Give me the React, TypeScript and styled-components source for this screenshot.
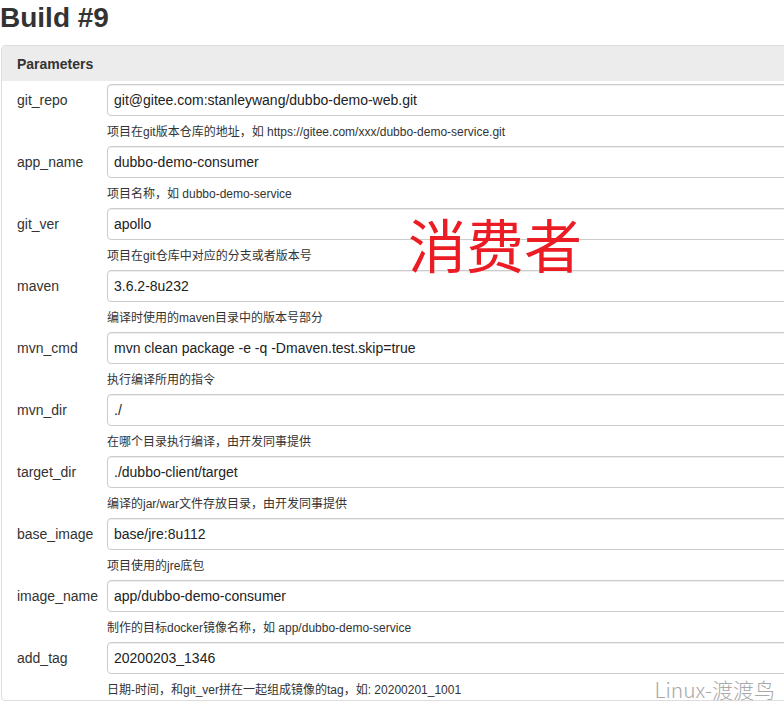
import styled, { createGlobalStyle } from "styled-components";

const GlobalStyle = createGlobalStyle`
  html, body {
    margin: 0;
    padding: 0;
    background: #fff;
    overflow: hidden;
  }
  body {
    font-family: "Liberation Sans", Arial, "Noto Sans CJK SC", sans-serif;
    color: #333;
  }
`;

const Page = styled.div`
  position: relative;
  width: 784px;
  height: 707px;
  overflow: hidden;
`;

const Title = styled.h1`
  margin: 0 0 9px 0;
  font-size: 28px;
  line-height: 36px;
  font-weight: bold;
  color: #333;
`;

const Panel = styled.section`
  margin-left: 1px;
  width: 900px;
  border: 1px solid #ddd;
  border-radius: 4px;
  overflow: hidden;
`;

const PanelHeader = styled.div`
  height: 35px;
  display: flex;
  align-items: center;
  padding-left: 15px;
  background: #ececec;
  font-size: 14px;
  font-weight: bold;
  color: #333;
`;

const PanelBody = styled.div`
  padding: 3px 0 0 15px;
  display: flex;
  flex-direction: column;
`;

const ParamRow = styled.div`
  display: grid;
  grid-template-columns: 90px 1fr;
  &:last-child > p {
    padding-bottom: 2px;
  }
`;

const Label = styled.label`
  height: 32px;
  display: flex;
  align-items: center;
  font-size: 14px;
  color: #333;
`;

const Field = styled.input`
  box-sizing: border-box;
  height: 32px;
  width: 100%;
  padding: 0 6px;
  border: 1px solid #ccc;
  border-radius: 4px;
  box-shadow: inset 0 1px 1px rgba(0, 0, 0, 0.075);
  font-family: "Liberation Sans", Arial, sans-serif;
  font-size: 14px;
  color: #222;
  background: #fff;
  outline: none;
`;

const Help = styled.p`
  grid-column: 2;
  margin: 0;
  padding: 8px 0 6px;
  font-size: 12px;
  line-height: 16px;
  color: #333;
  white-space: nowrap;
`;

const Stamp = styled.div`
  position: absolute;
  left: 408px;
  top: 214px;
  font-family: "Noto Sans CJK SC", sans-serif;
  font-size: 58px;
  line-height: 1;
  color: #ec1c24;
  pointer-events: none;
`;

const Watermark = styled.div`
  position: absolute;
  right: 9px;
  bottom: 7px;
  font-family: "Noto Sans CJK SC", "Noto Sans", sans-serif;
  font-weight: 300;
  font-size: 21px;
  line-height: 1;
  color: #a8a8a8;
  pointer-events: none;
`;

interface Param {
  name: string;
  value: string;
  help: string;
}

const params: Param[] = [
  {
    name: "git_repo",
    value: "git@gitee.com:stanleywang/dubbo-demo-web.git",
    help: "项目在git版本仓库的地址，如 https://gitee.com/xxx/dubbo-demo-service.git",
  },
  { name: "app_name", value: "dubbo-demo-consumer", help: "项目名称，如 dubbo-demo-service" },
  { name: "git_ver", value: "apollo", help: "项目在git仓库中对应的分支或者版本号" },
  { name: "maven", value: "3.6.2-8u232", help: "编译时使用的maven目录中的版本号部分" },
  {
    name: "mvn_cmd",
    value: "mvn clean package -e -q -Dmaven.test.skip=true",
    help: "执行编译所用的指令",
  },
  { name: "mvn_dir", value: "./", help: "在哪个目录执行编译，由开发同事提供" },
  {
    name: "target_dir",
    value: "./dubbo-client/target",
    help: "编译的jar/war文件存放目录，由开发同事提供",
  },
  { name: "base_image", value: "base/jre:8u112", help: "项目使用的jre底包" },
  {
    name: "image_name",
    value: "app/dubbo-demo-consumer",
    help: "制作的目标docker镜像名称，如 app/dubbo-demo-service",
  },
  {
    name: "add_tag",
    value: "20200203_1346",
    help: "日期-时间，和git_ver拼在一起组成镜像的tag，如: 20200201_1001",
  },
];

export default function App() {
  return (
    <Page>
      <GlobalStyle />
      <Title>Build #9</Title>
      <Panel>
        <PanelHeader>Parameters</PanelHeader>
        <PanelBody>
          {params.map((p) => (
            <ParamRow key={p.name}>
              <Label htmlFor={p.name}>{p.name}</Label>
              <Field id={p.name} defaultValue={p.value} readOnly />
              <Help>{p.help}</Help>
            </ParamRow>
          ))}
        </PanelBody>
      </Panel>
      <Stamp>消费者</Stamp>
      <Watermark>Linux-渡渡鸟</Watermark>
    </Page>
  );
}
